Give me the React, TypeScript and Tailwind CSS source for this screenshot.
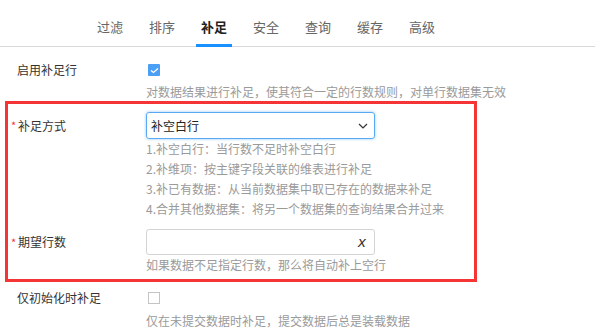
import React from "react";

const font = { fontFamily: '"Noto Sans CJK SC", "Noto Sans", sans-serif' };

function Tabs() {
  const tabs = ["过滤", "排序", "补足", "安全", "查询", "缓存", "高级"];
  return (
    <div className="h-[47px] border-b border-[#d9d9d9] flex pl-[92px] gap-[16px]">
      {tabs.map((t) => {
        const active = t === "补足";
        return (
          <div
            key={t}
            className={`relative px-[5px] pt-[17px] text-[13px] leading-[20px] ${
              active ? "text-[#222] font-bold" : "text-[#666]"
            }`}
          >
            {t}
            {active && (
              <div className="absolute left-0 right-0 bottom-[-1px] h-[3px] bg-[#1890ff]" />
            )}
          </div>
        );
      })}
    </div>
  );
}

function Hint({ children }: { children: React.ReactNode }) {
  return (
    <div className="text-[12px] leading-[20px] h-[20px] text-[#9a9a9a] whitespace-nowrap">
      {children}
    </div>
  );
}

export default function App() {
  return (
    <div className="w-[595px] h-[332px] bg-white overflow-hidden" style={font}>
      <Tabs />
      {/* Row 1 */}
      <div className="mt-[11px] flex items-center h-[24px]">
        <div className="w-[146px] pl-[17px] text-[12px] text-[#333]">启用补足行</div>
        <div className="ml-[2px] w-[12px] h-[12px] rounded-[1px] bg-[#4b9ff5] flex items-center justify-center">
          <svg width="9" height="7" viewBox="0 0 9 7">
            <polyline points="1,3.5 3.5,5.5 8,1.5" fill="none" stroke="white" strokeWidth="1.3" />
          </svg>
        </div>
      </div>
      <div className="pl-[146px] h-[19px] flex items-center">
        <Hint>对数据结果进行补足，使其符合一定的行数规则，对单行数据集无效</Hint>
      </div>

      {/* Red box */}
      <div className="ml-[5px] w-[472px] border-[3px] border-[#f53535] pt-[8px] pb-[4px]">
        <div className="flex items-center h-[27px]">
          <div className="w-[138px] pl-[3px] text-[12px] text-[#333] flex items-center">
            <span className="text-[#f53535] text-[11px] w-[7px]">*</span>
            <span>补足方式</span>
          </div>
          <div className="w-[229px] h-[27px] rounded-[3px] border border-[#5aa9f3] shadow-[0_0_3px_#8cc4f7] flex items-center justify-between pl-[4px] pr-[6px]">
            <span className="text-[12px] text-[#222]">补空白行</span>
            <svg width="10" height="6" viewBox="0 0 10 6">
              <polyline points="1,1 5,5 9,1" fill="none" stroke="#333" strokeWidth="1.2" />
            </svg>
          </div>
        </div>
        <div className="pl-[138px]">
          <Hint>1.补空白行：当行数不足时补空白行</Hint>
          <Hint>2.补维项：按主键字段关联的维表进行补足</Hint>
          <Hint>3.补已有数据：从当前数据集中取已存在的数据来补足</Hint>
          <Hint>4.合并其他数据集：将另一个数据集的查询结果合并过来</Hint>
        </div>
        <div className="mt-[10px] flex items-center h-[26px]">
          <div className="w-[138px] pl-[3px] text-[12px] text-[#333] flex items-center">
            <span className="text-[#f53535] text-[11px] w-[7px]">*</span>
            <span>期望行数</span>
          </div>
          <div className="w-[229px] h-[26px] rounded-[3px] border border-[#d4d4d4] flex items-center justify-end pr-[8px]">
            <span
              className="text-[14px] italic text-[#333]"
              style={{ fontFamily: '"DejaVu Sans", sans-serif' }}
            >
              x
            </span>
          </div>
        </div>
        <div className="pl-[138px]">
          <Hint>如果数据不足指定行数，那么将自动补上空行</Hint>
        </div>
      </div>

      {/* Last row */}
      <div className="mt-[4px] flex items-center h-[24px]">
        <div className="w-[146px] pl-[17px] text-[12px] text-[#333]">仅初始化时补足</div>
        <div className="ml-[2px] w-[12px] h-[12px] border border-[#c4c4c4] bg-white" />
      </div>
      <div className="pl-[146px] mt-[1px]">
        <Hint>仅在未提交数据时补足，提交数据后总是装载数据</Hint>
      </div>
    </div>
  );
}
